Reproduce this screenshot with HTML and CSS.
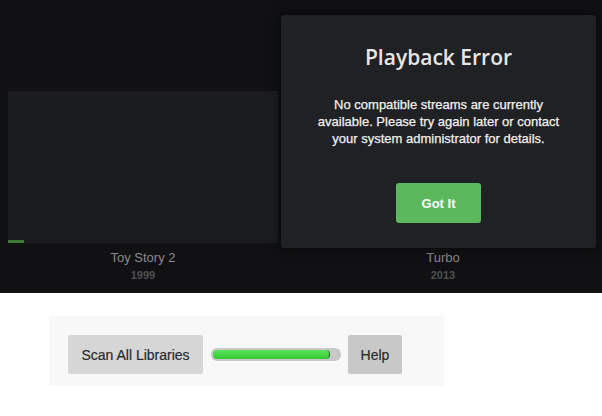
FILE: index.html
```html
<!DOCTYPE html>
<html lang="en">

<head>
    <meta charset="UTF-8">
    <meta name="viewport" content="width=device-width, initial-scale=1.0">
    <title>Library</title>
    <link rel="stylesheet" href="styles.css">
</head>

<body>
    <section class="library">
        <div class="cards">
            <div class="card">
                <div class="poster">
                    <div class="watched"></div>
                </div>
                <div class="card-title">Toy Story 2</div>
                <div class="card-year">1999</div>
            </div>
            <div class="card">
                <div class="poster"></div>
                <div class="card-title">Turbo</div>
                <div class="card-year">2013</div>
            </div>
        </div>

        <div class="dialog">
            <h2 class="dialog-title">Playback Error</h2>
            <p class="dialog-text">No compatible streams are currently available. Please try again later or contact your system administrator for details.</p>
            <button class="btn-ok">Got It</button>
        </div>
    </section>

    <section class="toolbar">
        <button class="btn-scan">Scan All Libraries</button>
        <div class="progress">
            <div class="progress-fill" style="width: 93%"></div>
        </div>
        <button class="btn-help">Help</button>
    </section>
</body>

</html>
```

FILE: styles.css
```css
body {
    margin: 0;
    background: #fff;
    font-family: "Liberation Sans", Arial, sans-serif;
}

.library {
    position: relative;
    height: 293px;
    background-color: #111113;
    overflow: hidden;
}

.cards {
    display: flex;
    gap: 30px;
    padding: 91px 0 0 8px;
}

.card {
    width: 270px;
    text-align: center;
}

.poster {
    position: relative;
    height: 152px;
    background-color: #1b1c1e;
}

.watched {
    position: absolute;
    left: 0;
    bottom: 0;
    width: 16px;
    height: 3px;
    background-color: #3e7a35;
}

.card-title {
    margin-top: 7px;
    font-size: 13px;
    line-height: 16px;
    color: #8a8a8a;
}

.card-year {
    font-size: 11px;
    font-weight: bold;
    line-height: 18px;
    color: #505050;
}

.dialog {
    position: absolute;
    left: 281px;
    top: 15px;
    width: 315px;
    height: 233px;
    box-sizing: border-box;
    padding-top: 28px;
    background-color: #202124;
    border-radius: 3px;
    box-shadow: 0 0 14px rgba(0, 0, 0, 0.6);
    text-align: center;
}

.dialog-title {
    margin: 0;
    font-family: "Open Sans", sans-serif;
    font-size: 21px;
    font-weight: 600;
    line-height: 28px;
    color: #e6e6e6;
}

.dialog-text {
    margin: 0 auto;
    padding-top: 25px;
    width: 252px;
    font-size: 13px;
    line-height: 17px;
    color: #f0f0f0;
    -webkit-text-stroke: 0.25px #f0f0f0;
}

.btn-ok {
    margin-top: 36px;
    width: 85px;
    height: 40px;
    border: 0;
    border-radius: 3px;
    background-color: #5cb85c;
    color: #fff;
    font-family: "Liberation Sans", Arial, sans-serif;
    font-size: 13px;
    font-weight: bold;
}

.toolbar {
    display: flex;
    align-items: flex-start;
    width: 395px;
    height: 70px;
    margin: 23px 0 0 49px;
    padding: 19px 19px 0;
    box-sizing: border-box;
    background-color: #f8f8f8;
}

.btn-scan,
.btn-help {
    height: 39px;
    border: 0;
    border-radius: 2px;
    font-family: "Liberation Sans", Arial, sans-serif;
    font-size: 14px;
    color: #2a2a2a;
    -webkit-text-stroke: 0.2px #2a2a2a;
}

.btn-scan {
    width: 135px;
    background-color: #d6d6d6;
}

.btn-help {
    width: 54px;
    background-color: #c8c8c8;
}

.progress {
    width: 130px;
    height: 13px;
    margin: 13px 7px 0 8px;
    padding: 2px;
    box-sizing: border-box;
    background-color: #c8c8c8;
    border-radius: 6px;
}

.progress-fill {
    height: 100%;
    background: linear-gradient(#5ae35a, #34c934);
    border-radius: 4px;
    border-right: 1px solid #1b6b1b;
    box-sizing: border-box;
}
```
